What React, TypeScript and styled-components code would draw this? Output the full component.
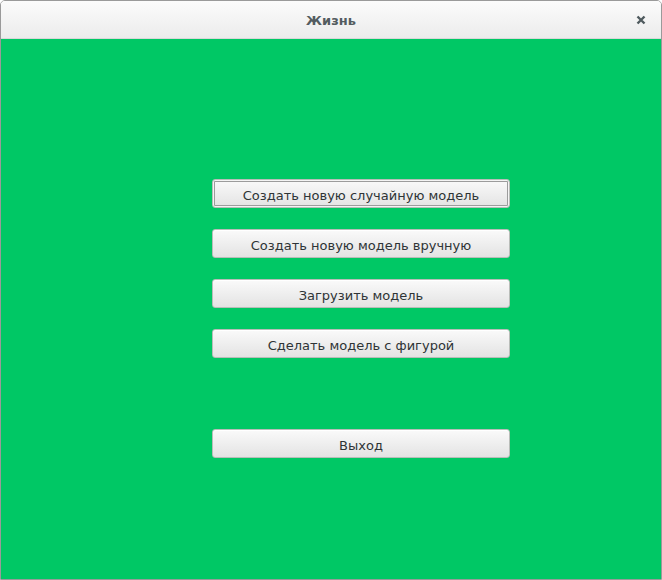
import styled, { createGlobalStyle } from 'styled-components';

const GlobalStyle = createGlobalStyle`
  html, body, #root {
    margin: 0;
    padding: 0;
    height: 100%;
  }
  body {
    background: #ffffff;
    font-family: "DejaVu Sans", "Liberation Sans", sans-serif;
  }
`;

const labels = [
  'Создать новую случайную модель',
  'Создать новую модель вручную',
  'Загрузить модель',
  'Сделать модель с фигурой',
];

const App = () => (
  <>
    <GlobalStyle />
    <Window>
      <TitleBar>
        <Title>Жизнь</Title>
        <CloseButton aria-label="close">
          <svg width="10" height="10" viewBox="0 0 10 10">
            <path d="M1.5 1.5 L8.5 8.5 M8.5 1.5 L1.5 8.5" stroke="#4f5a5e" strokeWidth="2.4" strokeLinecap="butt" />
          </svg>
        </CloseButton>
      </TitleBar>
      <Content>
        <Menu>
          {labels.map((label, i) => (
            <Button key={label} $focused={i === 0}>
              {label}
            </Button>
          ))}
          <Spacer />
          <Button>Выход</Button>
        </Menu>
      </Content>
    </Window>
  </>
);

const Window = styled.div`
  height: 100%;
  box-sizing: border-box;
  border: 1px solid #9a9a9a;
  border-radius: 5px 5px 0 0;
  overflow: hidden;
  display: flex;
  flex-direction: column;
`;

const TitleBar = styled.header`
  height: 37px;
  flex: none;
  display: flex;
  align-items: center;
  justify-content: center;
  position: relative;
  background: linear-gradient(#fbfbfb, #ececec);
  border-bottom: 1px solid #d8d8d8;
`;

const Title = styled.span`
  font-size: 13px;
  font-weight: bold;
  color: #535c60;
  margin-top: 1px;
`;

const CloseButton = styled.span`
  position: absolute;
  right: 15px;
  top: 14px;
  width: 10px;
  height: 10px;
  display: flex;
`;

const Content = styled.main`
  flex: 1;
  background: #00c865;
  padding: 140px 0 0 211px;
`;

const Menu = styled.div`
  width: 298px;
  display: flex;
  flex-direction: column;
  gap: 21px;
`;

const Spacer = styled.div`
  height: 29px;
`;

const Button = styled.div<{ $focused?: boolean }>`
  height: 29px;
  box-sizing: border-box;
  padding-top: 3px;
  border: 1px solid #b9bdb9;
  border-radius: 3px;
  background: linear-gradient(#fafafa, #e3e3e3);
  box-shadow: ${(p) =>
    p.$focused
      ? 'inset 0 0 0 1px #f4f4f4, inset 0 0 0 2px #9c9c9c'
      : 'inset 0 1px 0 #ffffff'};
  display: flex;
  align-items: center;
  justify-content: center;
  font-size: 13px;
  color: #2e3436;
`;

export default App;
